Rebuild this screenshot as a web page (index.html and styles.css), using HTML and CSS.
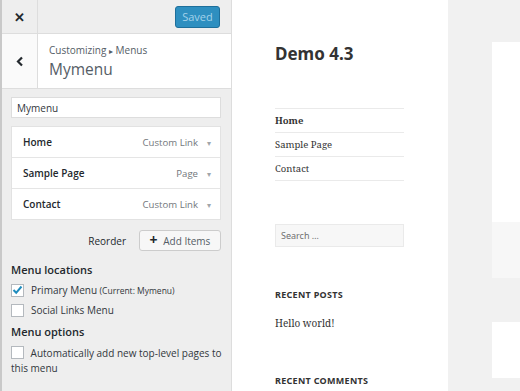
FILE: index.html
```html
<!DOCTYPE html>
<html lang="en">

<head>
  <meta charset="UTF-8" />
  <meta name="viewport" content="width=device-width, initial-scale=1.0" />
  <title>Customize: Menus</title>
  <link rel="stylesheet" href="styles.css">
</head>

<body>
  <div class="sidebar">
    <div class="topbar">
      <span class="close">&#x2715;</span>
      <button class="saved" disabled>Saved</button>
    </div>

    <div class="section-head">
      <span class="back">
        <svg width="8" height="11" viewBox="0 0 8 11"><path d="M6 1.5 L2 5.5 L6 9.5" fill="none" stroke="#23282d" stroke-width="2.2" /></svg>
      </span>
      <div class="section-title">
        <div class="crumb">Customizing <span class="caret">&#9656;</span> Menus</div>
        <div class="name">Mymenu</div>
      </div>
    </div>

    <div class="panel">
      <input type="text" class="menu-name" value="Mymenu" />

      <div class="menu-items">
        <div class="item">
          <span class="item-title">Home</span>
          <span class="item-type">Custom Link</span>
          <span class="arrow">&#9662;</span>
        </div>
        <div class="item">
          <span class="item-title">Sample Page</span>
          <span class="item-type">Page</span>
          <span class="arrow">&#9662;</span>
        </div>
        <div class="item">
          <span class="item-title">Contact</span>
          <span class="item-type">Custom Link</span>
          <span class="arrow">&#9662;</span>
        </div>
      </div>

      <div class="actions">
        <span class="reorder">Reorder</span>
        <button class="add-items"><span class="plus">+</span> Add Items</button>
      </div>

      <h3 class="locations">Menu locations</h3>
      <label class="check">
        <span class="box">
          <svg width="11" height="10" viewBox="0 0 11 10"><path d="M1.5 5 L4.2 7.8 L9.5 1.5" fill="none" stroke="#1e8cbe" stroke-width="2" /></svg>
        </span>
        <span>Primary Menu <small>(Current: Mymenu)</small></span>
      </label>
      <label class="check">
        <span class="box"></span>
        <span>Social Links Menu</span>
      </label>

      <h3 class="options">Menu options</h3>
      <label class="check wrap">
        <span class="box"></span>
        Automatically add new top-level pages to this menu
      </label>
    </div>
  </div>

  <div class="preview">
    <div class="site">
      <div class="site-title">Demo 4.3</div>
      <ul class="nav">
        <li class="current">Home</li>
        <li>Sample Page</li>
        <li>Contact</li>
      </ul>
      <div class="search">Search &hellip;</div>
      <div class="widget-title">Recent Posts</div>
      <div class="post-link">Hello world!</div>
      <div class="widget-title comments">Recent Comments</div>
    </div>
    <div class="content">
      <div class="card">
        <div class="card-foot"></div>
      </div>
      <div class="card small"></div>
    </div>
  </div>
</body>

</html>
```

FILE: styles.css
```css
body {
  margin: 0;
  padding: 0;
  display: flex;
  height: 391px;
  overflow: hidden;
  font-family: "Open Sans", "Noto Sans", sans-serif;
  color: #23282d;
}

/* customizer sidebar */

.sidebar {
  width: 229px;
  flex-shrink: 0;
  background: #eeeeee;
  border-left: 2px solid #c9c9c9;
  border-right: 1px solid #dddddd;
}

.topbar {
  display: flex;
  justify-content: space-between;
  align-items: center;
  height: 33px;
  border-bottom: 1px solid #dddddd;
}

.close {
  width: 35px;
  height: 33px;
  display: flex;
  align-items: center;
  justify-content: center;
  border-right: 1px solid #dddddd;
  font-size: 13px;
  font-weight: bold;
  color: #23282d;
}

.saved {
  margin-right: 11px;
  width: 45px;
  height: 22px;
  padding: 0;
  font-family: inherit;
  font-size: 11px;
  color: #a3d2ea;
  background: #2e8fc0;
  border: 1px solid #1e6f9b;
  border-radius: 3px;
}

.section-head {
  display: flex;
  height: 54px;
  background: #ffffff;
  border-bottom: 1px solid #dddddd;
}

.back {
  width: 35px;
  display: flex;
  align-items: center;
  justify-content: center;
  background: #fafafa;
  border-right: 1px solid #dddddd;
}

.section-title {
  padding: 9px 0 0 11px;
}

.crumb {
  font-size: 10px;
  line-height: 15px;
  color: #555d66;
}

.caret {
  font-size: 8px;
}

.name {
  font-size: 15.5px;
  line-height: 22px;
  color: #555d66;
}

.panel {
  padding: 8px 10px 0 9px;
}

.menu-name {
  display: block;
  box-sizing: border-box;
  width: 210px;
  height: 21px;
  margin: 0 0 8px;
  padding: 0 5px;
  font-family: inherit;
  font-size: 10px;
  color: #32373c;
  border: 1px solid #dddddd;
  background: #ffffff;
}

.menu-items {
  width: 210px;
  box-sizing: border-box;
  border: 1px solid #e2e2e2;
  background: #ffffff;
}

.item {
  display: flex;
  align-items: center;
  height: 30px;
  padding: 0 9px 0 11px;
  font-size: 10px;
}

.item + .item {
  border-top: 1px solid #e5e5e5;
}

.item-title {
  flex: 1;
  font-weight: 600;
  color: #23282d;
}

.item-type {
  color: #72777c;
  font-size: 9.6px;
}

.arrow {
  margin-left: 9px;
  font-size: 8px;
  color: #a0a5aa;
}

.actions {
  display: flex;
  justify-content: flex-end;
  align-items: center;
  gap: 13px;
  width: 210px;
  margin-top: 10px;
}

.reorder {
  font-size: 10px;
}

.add-items {
  width: 82px;
  height: 21px;
  padding: 0;
  font-family: inherit;
  font-size: 10px;
  color: #555d66;
  background: #f7f7f7;
  border: 1px solid #cccccc;
  border-radius: 3px;
}

.plus {
  font-size: 14px;
  font-weight: bold;
  color: #23282d;
  line-height: 10px;
  margin-right: 3px;
}

h3 {
  font-size: 11px;
  line-height: 16px;
  font-weight: 600;
  color: #23282d;
}

h3.locations {
  margin: 11px 0 2px;
}

h3.options {
  margin: 4px 0 6px;
}

.check {
  display: flex;
  align-items: center;
  gap: 7px;
  height: 20px;
  font-size: 10px;
  color: #32373c;
}

.check small {
  font-size: 8.5px;
}

.check.wrap {
  display: block;
  height: auto;
  line-height: 15px;
  width: 212px;
}

.box {
  display: inline-flex;
  align-items: center;
  justify-content: center;
  box-sizing: border-box;
  width: 13px;
  height: 13px;
  border: 1px solid #b4b9be;
  background: #ffffff;
  vertical-align: -2px;
}

.check.wrap .box {
  margin-right: 4px;
}

/* site preview */

.preview {
  flex: 1;
  display: flex;
  background: #f1f1f1;
}

.site {
  width: 173px;
  padding-left: 43px;
  background: #ffffff;
}

.site-title {
  margin-top: 42px;
  font-family: "Noto Sans", sans-serif;
  font-size: 17px;
  font-weight: bold;
  color: #333333;
}

.nav {
  list-style: none;
  margin: 43px 0 0;
  padding: 0;
  width: 129px;
  border-top: 1px solid #eaeaea;
}

.nav li {
  height: 23px;
  line-height: 23px;
  border-bottom: 1px solid #eaeaea;
  font-family: "Noto Serif", "DejaVu Serif", serif;
  font-size: 9.5px;
  color: #333333;
}

.nav .current {
  font-weight: bold;
}

.search {
  box-sizing: border-box;
  width: 129px;
  height: 23px;
  margin-top: 43px;
  padding-left: 5px;
  line-height: 21px;
  font-family: "Noto Sans", sans-serif;
  font-size: 9px;
  color: #707070;
  background: #f7f7f7;
  border: 1px solid #eaeaea;
}

.widget-title {
  margin-top: 41px;
  font-family: "Noto Sans", sans-serif;
  font-size: 9px;
  font-weight: bold;
  letter-spacing: 0.3px;
  text-transform: uppercase;
  color: #333333;
}

.widget-title.comments {
  margin-top: 44px;
}

.post-link {
  margin-top: 15px;
  font-family: "Noto Serif", "DejaVu Serif", serif;
  font-size: 10px;
  color: #333333;
}

.content {
  flex: 1;
  padding: 42px 0 0 44px;
}

.card {
  height: 236px;
  display: flex;
  flex-direction: column;
  justify-content: flex-end;
  background: #ffffff;
}

.card-foot {
  height: 56px;
  background: #f7f7f7;
}

.card.small {
  height: 56px;
  margin-top: 44px;
}
```
